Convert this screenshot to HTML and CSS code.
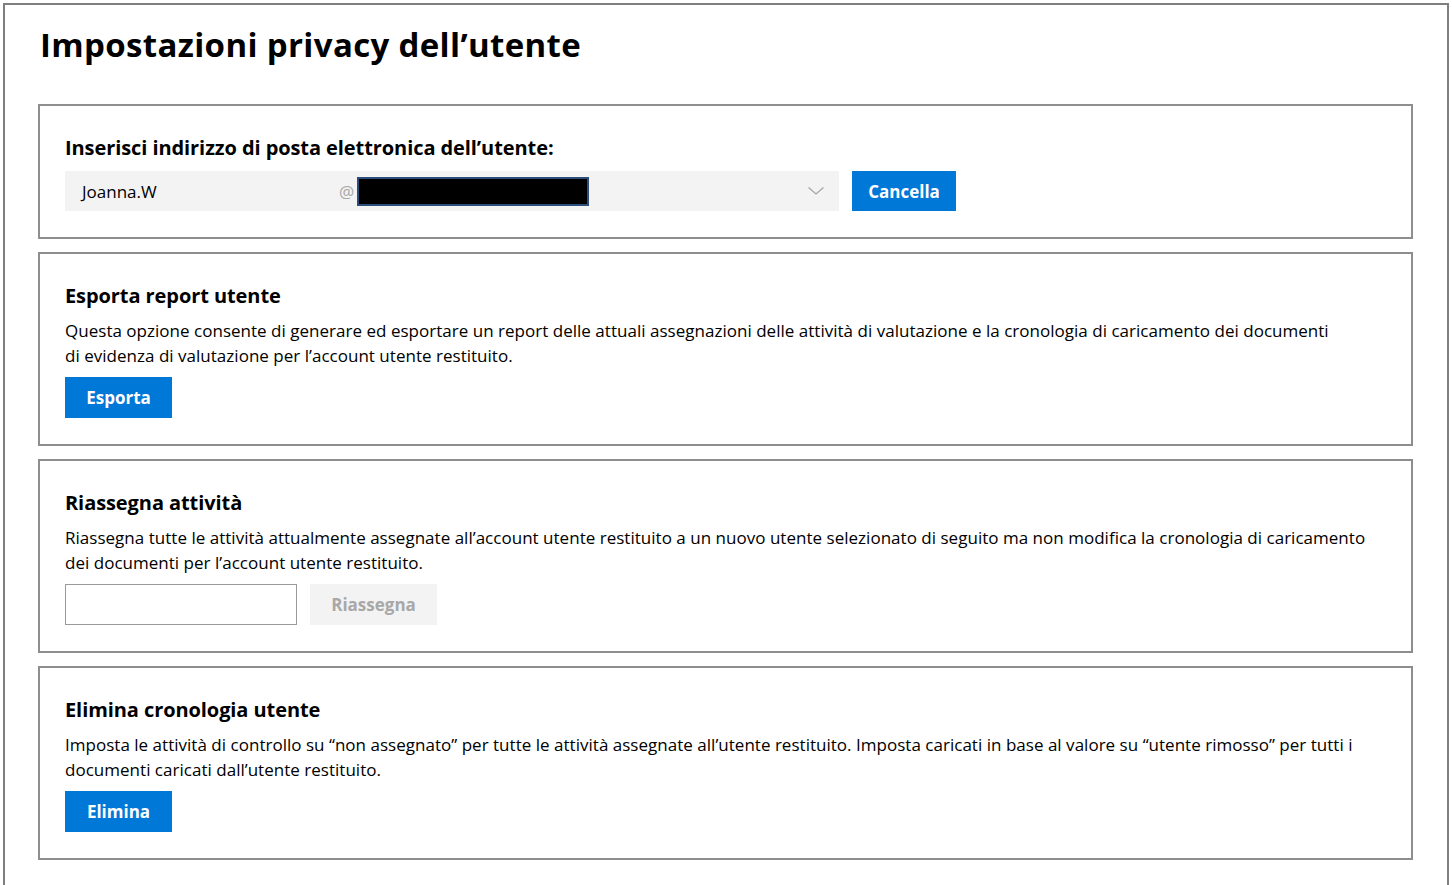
FILE: index.html
```html
<!DOCTYPE html>
<html lang="it">
<head>
<meta charset="utf-8">
<title>Impostazioni privacy dell’utente</title>
<link rel="stylesheet" href="styles.css">
</head>
<body>
<div class="frame">
  <h1 class="title">Impostazioni privacy dell’utente</h1>

  <section class="card">
    <h2 class="card-title">Inserisci indirizzo di posta elettronica dell’utente:</h2>
    <div class="email-row">
      <div class="email-field">
        <span class="local">Joanna.W</span>
        <span class="at">@</span>
        <span class="domain"></span>
        <svg class="chevron" width="16" height="8" viewBox="0 0 16 8"><path d="M0.5 0.5 L8 7 L15.5 0.5" fill="none" stroke="#a6a6a6" stroke-width="1.2"/></svg>
      </div>
      <button class="btn btn-primary btn-cancel">Cancella</button>
    </div>
  </section>

  <section class="card">
    <h2 class="card-title">Esporta report utente</h2>
    <p class="card-text card-text-narrow">Questa opzione consente di generare ed esportare un report delle attuali assegnazioni delle attività di valutazione e la cronologia di caricamento dei documenti di evidenza di valutazione per l’account utente restituito.</p>
    <button class="btn btn-primary btn-action">Esporta</button>
  </section>

  <section class="card">
    <h2 class="card-title">Riassegna attività</h2>
    <p class="card-text">Riassegna tutte le attività attualmente assegnate all’account utente restituito a un nuovo utente selezionato di seguito ma non modifica la cronologia di caricamento dei documenti per l’account utente restituito.</p>
    <div class="reassign-row">
      <input class="text-input" type="text" aria-label="Nuovo utente">
      <button class="btn btn-disabled" disabled>Riassegna</button>
    </div>
  </section>

  <section class="card">
    <h2 class="card-title">Elimina cronologia utente</h2>
    <p class="card-text">Imposta le attività di controllo su “non assegnato” per tutte le attività assegnate all’utente restituito. Imposta caricati in base al valore su “utente rimosso” per tutti i documenti caricati dall’utente restituito.</p>
    <button class="btn btn-primary btn-action">Elimina</button>
  </section>
</div>
</body>
</html>
```
FILE: styles.css
```css
* { box-sizing: border-box; }

html, body {
  margin: 0;
  padding: 0;
  background: #ffffff;
  height: 100%;
  overflow: hidden;
}

body {
  font-family: "Open Sans", "Noto Sans", "Liberation Sans", sans-serif;
  color: #000;
}

.frame {
  margin: 3px 0 0 3px;
  width: 1446px;
  min-height: 900px;
  border: 2px solid #7f7f7f;
  border-bottom: none;
  padding: 20px 34px 0 33px;
}

.title {
  margin: 0 0 39px 2px;
  font-size: 33px;
  line-height: 40px;
  font-weight: 700;
  letter-spacing: 0.35px;
}

.card {
  border: 2px solid #8e8e8e;
  padding: 28px 25px 26px 25px;
  margin-bottom: 13px;
}

.card-title {
  margin: 0;
  font-size: 20px;
  line-height: 28px;
  font-weight: 700;
  letter-spacing: -0.08px;
}

.card-text {
  margin: 8px 0 9px 0;
  font-size: 17px;
  line-height: 25px;
  letter-spacing: 0.02px;
}

.card-text-narrow {
  max-width: 1275px;
}

.email-row {
  display: flex;
  gap: 13px;
  margin-top: 9px;
}

.email-field {
  width: 774px;
  height: 40px;
  background: #f3f3f3;
  display: flex;
  align-items: center;
  padding: 0 15px 0 17px;
  font-size: 17px;
  letter-spacing: 0;
}

.local {
  width: 257px;
}

.at {
  color: #a8a8a8;
  width: 18px;
}

.domain {
  width: 232px;
  height: 29px;
  background: #000;
  border: 2px solid #2c4c7c;
}

.chevron {
  margin-left: auto;
}

.btn {
  font-family: inherit;
  font-size: 17px;
  font-weight: 700;
  letter-spacing: 0;
  border: none;
  height: 41px;
  padding: 0;
  cursor: pointer;
}

.btn-primary {
  background: #0078d7;
  color: #fff;
}

.btn-cancel {
  width: 104px;
  height: 40px;
}

.btn-action {
  display: block;
  width: 107px;
}

.reassign-row {
  display: flex;
  gap: 13px;
}

.text-input {
  width: 232px;
  height: 41px;
  border: 1px solid #9a9a9a;
  background: #fff;
  font-family: inherit;
  font-size: 17px;
  padding: 0 8px;
  margin: 0;
}

.btn-disabled {
  width: 127px;
  background: #f3f3f3;
  color: #a8a8a8;
  cursor: default;
}
```
